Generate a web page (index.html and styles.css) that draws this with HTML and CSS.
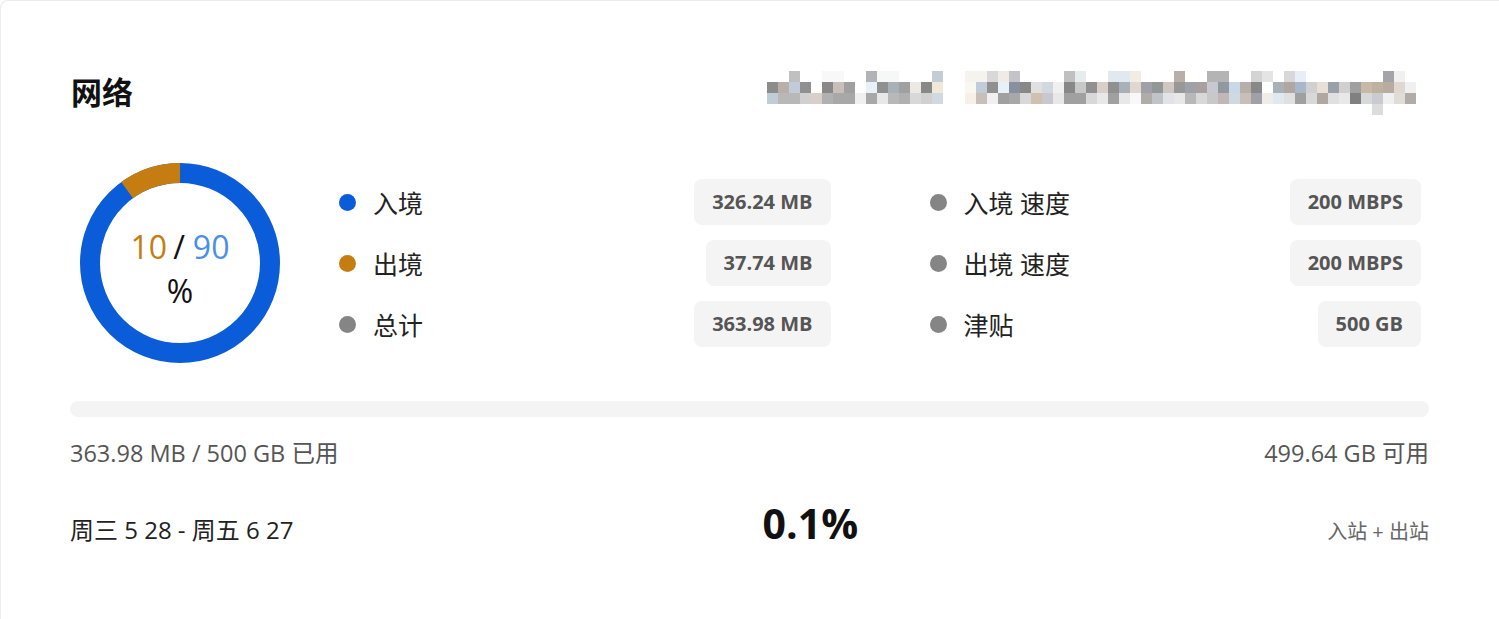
FILE: index.html
```html
<!DOCTYPE html>
<html lang="zh-CN">
<head>
  <meta charset="UTF-8" />
  <meta name="viewport" content="width=device-width, initial-scale=1.0"/>
  <title>网络</title>
  <link rel="stylesheet" href="styles.css">
</head>
<body>
  <div class="network-card">
    <div class="card-head">
      <h2 class="card-title">网络</h2>
      <!-- masked hostname -->
      <svg class="masked" viewBox="0 0 60 4" preserveAspectRatio="none" shape-rendering="crispEdges">
        <g>
          <rect x="2" y="0" width="1" height="1" fill="#c0c0c0"/>
          <rect x="5" y="0" width="2" height="1" fill="#f8f8f8"/>
          <rect x="9" y="0" width="1" height="1" fill="#b0b4b8"/>
          <rect x="10" y="0" width="2" height="1" fill="#f6f8f8"/>
          <rect x="15" y="0" width="1" height="1" fill="#c4ccd4"/>
          <rect x="18" y="0" width="2" height="1" fill="#f6f2ee"/>
          <rect x="20" y="0" width="1" height="1" fill="#d8d8d8"/>
          <rect x="21" y="0" width="1" height="1" fill="#f0ebe4"/>
          <rect x="22" y="0" width="1" height="1" fill="#c4c4c8"/>
          <rect x="27" y="0" width="1" height="1" fill="#c0c0c0"/>
          <rect x="28" y="0" width="1" height="1" fill="#e4ecec"/>
          <rect x="31" y="0" width="2" height="1" fill="#e2e8f0"/>
          <rect x="33" y="0" width="1" height="1" fill="#f2ece4"/>
          <rect x="37" y="0" width="1" height="1" fill="#b8b0a8"/>
          <rect x="40" y="0" width="2" height="1" fill="#b4b4b4"/>
          <rect x="44" y="0" width="1" height="1" fill="#d4d4d4"/>
          <rect x="45" y="0" width="1" height="1" fill="#e4e4e4"/>
          <rect x="47" y="0" width="1" height="1" fill="#d8d8d8"/>
          <rect x="48" y="0" width="1" height="1" fill="#e8eef8"/>
          <rect x="56" y="0" width="1" height="1" fill="#a4a4a8"/>
          <rect x="57" y="0" width="1" height="1" fill="#f0f0f0"/>
        </g>
        <g>
          <rect x="0" y="1" width="1" height="1" fill="#8c8c8c"/>
          <rect x="1" y="1" width="1" height="1" fill="#b8b0a8"/>
          <rect x="2" y="1" width="1" height="1" fill="#c0ccd8"/>
          <rect x="3" y="1" width="1" height="1" fill="#909090"/>
          <rect x="5" y="1" width="1" height="1" fill="#888888"/>
          <rect x="6" y="1" width="1" height="1" fill="#c8c0b8"/>
          <rect x="7" y="1" width="1" height="1" fill="#a0a0a0"/>
          <rect x="9" y="1" width="1" height="1" fill="#e8f0f8"/>
          <rect x="10" y="1" width="1" height="1" fill="#909090"/>
          <rect x="11" y="1" width="1" height="1" fill="#a8b0b8"/>
          <rect x="12" y="1" width="1" height="1" fill="#a0a0a0"/>
          <rect x="13" y="1" width="1" height="1" fill="#ece8e4"/>
          <rect x="14" y="1" width="1" height="1" fill="#888888"/>
          <rect x="15" y="1" width="1" height="1" fill="#f0e8d8"/>
          <rect x="18" y="1" width="1" height="1" fill="#f8f8f0"/>
          <rect x="19" y="1" width="1" height="1" fill="#c0ccd8"/>
          <rect x="20" y="1" width="1" height="1" fill="#909090"/>
          <rect x="21" y="1" width="1" height="1" fill="#e8f0f8"/>
          <rect x="22" y="1" width="1" height="1" fill="#8890a0"/>
          <rect x="23" y="1" width="1" height="1" fill="#888888"/>
          <rect x="24" y="1" width="1" height="1" fill="#e0e0e0"/>
          <rect x="25" y="1" width="1" height="1" fill="#d0d8e0"/>
          <rect x="26" y="1" width="1" height="1" fill="#f0f0f0"/>
          <rect x="27" y="1" width="1" height="1" fill="#888888"/>
          <rect x="28" y="1" width="1" height="1" fill="#c8c8c8"/>
          <rect x="29" y="1" width="1" height="1" fill="#909090"/>
          <rect x="30" y="1" width="1" height="1" fill="#d8d0c8"/>
          <rect x="31" y="1" width="1" height="1" fill="#909090"/>
          <rect x="32" y="1" width="1" height="1" fill="#a8b0b8"/>
          <rect x="33" y="1" width="1" height="1" fill="#e0d8d0"/>
          <rect x="34" y="1" width="1" height="1" fill="#a0a0a8"/>
          <rect x="35" y="1" width="1" height="1" fill="#909898"/>
          <rect x="36" y="1" width="1" height="1" fill="#d0c8c0"/>
          <rect x="37" y="1" width="1" height="1" fill="#989898"/>
          <rect x="38" y="1" width="1" height="1" fill="#a0a0a8"/>
          <rect x="39" y="1" width="1" height="1" fill="#a8a0a0"/>
          <rect x="40" y="1" width="1" height="1" fill="#c8c8d0"/>
          <rect x="41" y="1" width="1" height="1" fill="#9098a0"/>
          <rect x="42" y="1" width="1" height="1" fill="#c8d8e8"/>
          <rect x="43" y="1" width="1" height="1" fill="#b8b0a8"/>
          <rect x="44" y="1" width="1" height="1" fill="#888888"/>
          <rect x="46" y="1" width="1" height="1" fill="#a8b0b8"/>
          <rect x="47" y="1" width="1" height="1" fill="#b0a8a0"/>
          <rect x="48" y="1" width="1" height="1" fill="#a8b8c8"/>
          <rect x="49" y="1" width="1" height="1" fill="#d0d0d0"/>
          <rect x="50" y="1" width="1" height="1" fill="#e8e0d8"/>
          <rect x="51" y="1" width="1" height="1" fill="#98a0a8"/>
          <rect x="52" y="1" width="1" height="1" fill="#d0d0d0"/>
          <rect x="53" y="1" width="1" height="1" fill="#a0a0a0"/>
          <rect x="54" y="1" width="1" height="1" fill="#c8b8a8"/>
          <rect x="55" y="1" width="1" height="1" fill="#c0b0a0"/>
          <rect x="56" y="1" width="1" height="1" fill="#b8aca0"/>
          <rect x="57" y="1" width="1" height="1" fill="#e0d8d0"/>
          <rect x="58" y="1" width="1" height="1" fill="#f0f0f0"/>
        </g>
        <g>
          <rect x="0" y="2" width="1" height="1" fill="#c0ccd8"/>
          <rect x="1" y="2" width="2" height="1" fill="#b8b8b8"/>
          <rect x="3" y="2" width="1" height="1" fill="#d0d0d0"/>
          <rect x="4" y="2" width="1" height="1" fill="#d8d0c8"/>
          <rect x="5" y="2" width="1" height="1" fill="#b0b0b0"/>
          <rect x="6" y="2" width="2" height="1" fill="#a8a8a8"/>
          <rect x="8" y="2" width="1" height="1" fill="#f0f0f0"/>
          <rect x="9" y="2" width="1" height="1" fill="#a8a8a8"/>
          <rect x="10" y="2" width="1" height="1" fill="#e8e8e8"/>
          <rect x="11" y="2" width="1" height="1" fill="#b8b8b8"/>
          <rect x="12" y="2" width="1" height="1" fill="#b0b0b0"/>
          <rect x="13" y="2" width="1" height="1" fill="#d8d8d8"/>
          <rect x="14" y="2" width="1" height="1" fill="#d0d0d0"/>
          <rect x="15" y="2" width="1" height="1" fill="#d0d8e0"/>
          <rect x="18" y="2" width="1" height="1" fill="#f8f0e8"/>
          <rect x="19" y="2" width="1" height="1" fill="#c8c0b8"/>
          <rect x="20" y="2" width="1" height="1" fill="#f0f0f0"/>
          <rect x="21" y="2" width="1" height="1" fill="#a0a0a0"/>
          <rect x="22" y="2" width="1" height="1" fill="#a8a8a8"/>
          <rect x="23" y="2" width="1" height="1" fill="#d8d8d8"/>
          <rect x="24" y="2" width="1" height="1" fill="#d0c0b0"/>
          <rect x="25" y="2" width="1" height="1" fill="#c8c8d0"/>
          <rect x="26" y="2" width="1" height="1" fill="#e8e8e8"/>
          <rect x="27" y="2" width="2" height="1" fill="#a0a0a0"/>
          <rect x="29" y="2" width="1" height="1" fill="#d8d8d8"/>
          <rect x="30" y="2" width="1" height="1" fill="#e8e8e8"/>
          <rect x="31" y="2" width="1" height="1" fill="#a0a0a0"/>
          <rect x="32" y="2" width="1" height="1" fill="#e8e8e8"/>
          <rect x="33" y="2" width="1" height="1" fill="#f8f8f8"/>
          <rect x="34" y="2" width="1" height="1" fill="#b0aca8"/>
          <rect x="35" y="2" width="1" height="1" fill="#c0c4c8"/>
          <rect x="36" y="2" width="1" height="1" fill="#e0e4e8"/>
          <rect x="37" y="2" width="1" height="1" fill="#e8e8e8"/>
          <rect x="38" y="2" width="1" height="1" fill="#b8b8b8"/>
          <rect x="39" y="2" width="1" height="1" fill="#d8d8d8"/>
          <rect x="40" y="2" width="1" height="1" fill="#c8c8c8"/>
          <rect x="41" y="2" width="1" height="1" fill="#c0b8b8"/>
          <rect x="42" y="2" width="1" height="1" fill="#d0d8e0"/>
          <rect x="43" y="2" width="1" height="1" fill="#c8c0b8"/>
          <rect x="44" y="2" width="1" height="1" fill="#a0a0a8"/>
          <rect x="45" y="2" width="1" height="1" fill="#f0ece8"/>
          <rect x="46" y="2" width="1" height="1" fill="#e0e8f0"/>
          <rect x="47" y="2" width="1" height="1" fill="#e0e0e0"/>
          <rect x="48" y="2" width="1" height="1" fill="#a0a0a0"/>
          <rect x="49" y="2" width="1" height="1" fill="#d8d8d8"/>
          <rect x="50" y="2" width="1" height="1" fill="#b0a8a0"/>
          <rect x="51" y="2" width="1" height="1" fill="#e0e0e0"/>
          <rect x="52" y="2" width="1" height="1" fill="#e8e8e8"/>
          <rect x="53" y="2" width="1" height="1" fill="#808080"/>
          <rect x="54" y="2" width="1" height="1" fill="#d8d8d8"/>
          <rect x="55" y="2" width="1" height="1" fill="#c8ccd0"/>
          <rect x="56" y="2" width="1" height="1" fill="#f0f0f0"/>
          <rect x="57" y="2" width="1" height="1" fill="#e0dcd8"/>
          <rect x="58" y="2" width="1" height="1" fill="#b0aca8"/>
        </g>
        <rect x="55" y="3" width="1" height="1" fill="#dcdcdc"/>
      </svg>
    </div>

    <div class="usage">
      <div class="donut">
        <svg viewBox="0 0 220 220" width="220" height="220">
          <circle cx="110" cy="110" r="90" fill="none" stroke="#0b5cd8" stroke-width="20"/>
          <circle cx="110" cy="110" r="90" fill="none" stroke="#c57d12" stroke-width="20"
                  stroke-dasharray="56.55 600" transform="rotate(-126 110 110)"/>
        </svg>
        <div class="donut-label">
          <div><span class="out">10</span>/<span class="in">90</span></div>
          <div>%</div>
        </div>
      </div>

      <div class="legend">
        <ul class="legend-col">
          <li><span class="dot dot-in"></span><span class="legend-name">入境</span><span class="pill">326.24 MB</span></li>
          <li><span class="dot dot-out"></span><span class="legend-name">出境</span><span class="pill">37.74 MB</span></li>
          <li><span class="dot"></span><span class="legend-name">总计</span><span class="pill">363.98 MB</span></li>
        </ul>
        <ul class="legend-col">
          <li><span class="dot"></span><span class="legend-name">入境 速度</span><span class="pill">200 MBPS</span></li>
          <li><span class="dot"></span><span class="legend-name">出境 速度</span><span class="pill">200 MBPS</span></li>
          <li><span class="dot"></span><span class="legend-name">津贴</span><span class="pill">500 GB</span></li>
        </ul>
      </div>
    </div>

    <div class="quota-bar"></div>
    <div class="quota-meta">
      <span>363.98 MB / 500 GB 已用</span>
      <span>499.64 GB 可用</span>
    </div>

    <div class="period">
      <span class="period-range">周三 5 28 - 周五 6 27</span>
      <span class="period-pct">0.1%</span>
      <span class="period-note">入站 + 出站</span>
    </div>
  </div>
</body>
</html>
```

FILE: styles.css
```css
* { margin: 0; padding: 0; box-sizing: border-box; }
html, body { overflow: hidden; }
body {
  font-family: "Open Sans", "Noto Sans CJK SC", sans-serif;
  background-color: #fff;
  color: #222;
}
.network-card {
  width: 100%;
  min-height: 100vh;
  background-color: #fff;
  border: 1px solid #ececec;
  border-right: 0;
  border-bottom: 0;
  border-top-left-radius: 8px;
  padding: 69px 70px 40px 69px;
}
.card-head {
  display: flex;
  justify-content: space-between;
  align-items: center;
  height: 44px;
}
.card-title {
  font-size: 31px;
  line-height: 44px;
  font-weight: bold;
  color: #111;
  margin-left: 1px;
}
.masked {
  width: 660px;
  height: 44px;
  margin-top: 2px;
  margin-right: 2px;
}

/* donut + legend */
.usage {
  display: flex;
  align-items: center;
  margin-top: 39px;
}
.donut {
  position: relative;
  width: 220px;
  height: 220px;
  flex: none;
}
.donut svg { display: block; }
.donut-label {
  position: absolute;
  top: 0;
  left: 0;
  width: 100%;
  height: 100%;
  display: flex;
  flex-direction: column;
  justify-content: center;
  align-items: center;
  padding-top: 12px;
  font-size: 32px;
  line-height: 44px;
  color: #111;
}
.donut-label .out { color: #c57d12; margin-right: 6px; }
.donut-label .in { color: #4a8fe7; margin-left: 8px; }
.legend {
  flex: 1;
  display: flex;
  gap: 99px;
  padding-left: 49px;
  padding-right: 8px;
}
.legend-col {
  flex: 1;
  list-style: none;
  display: flex;
  flex-direction: column;
  gap: 15px;
}
.legend-col li {
  display: flex;
  align-items: center;
  height: 46px;
}
.dot {
  width: 17px;
  height: 17px;
  border-radius: 50%;
  background-color: #858585;
  margin-right: 17px;
  flex: none;
}
.dot-in { background-color: #0b5cd8; }
.dot-out { background-color: #c57d12; }
.legend-name {
  flex: 1;
  font-size: 25px;
  color: #222;
}
.pill {
  background-color: #f4f4f4;
  border-radius: 8px;
  height: 46px;
  line-height: 46px;
  padding: 0 18px;
  font-size: 20px;
  font-weight: bold;
  color: #555;
}

/* quota */
.quota-bar {
  margin-top: 28px;
  height: 16px;
  border-radius: 8px;
  background-color: #f4f4f4;
}
.quota-meta {
  display: flex;
  justify-content: space-between;
  margin-top: 20px;
  font-size: 23.5px;
  line-height: 32px;
  color: #555;
}
.period {
  display: flex;
  justify-content: space-between;
  align-items: baseline;
  margin-top: 29px;
}
.period-range { font-size: 24px; color: #222; }
.period-pct {
  font-size: 41px;
  line-height: 50px;
  font-weight: bold;
  color: #111;
}
.period-note { font-size: 20px; color: #666; }
```
